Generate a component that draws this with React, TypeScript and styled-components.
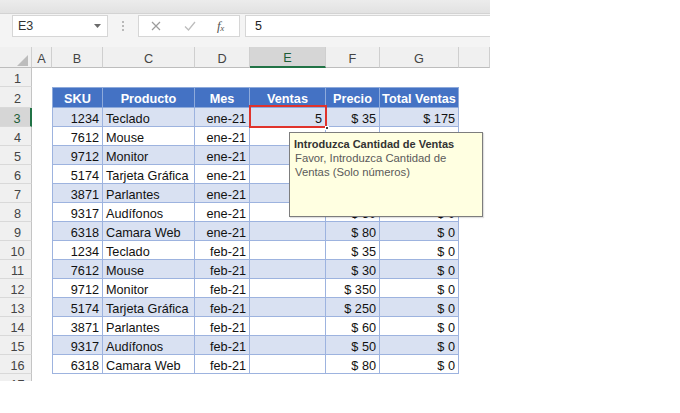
import React from 'react';
import styled, { createGlobalStyle, css } from 'styled-components';

const GlobalStyle = createGlobalStyle`
  html, body { margin: 0; padding: 0; background: #ffffff; }
  body { font-family: "Liberation Sans", Arial, sans-serif; }
  * { box-sizing: border-box; }
`;

const COLS = [32, 20, 51, 92, 55, 76, 54, 79, 31];
const gridCols = COLS.map((c) => `${c}px`).join(' ');

const Page = styled.div`
  width: 680px;
  height: 413px;
  background: #ffffff;
  overflow: hidden;
`;

const Window = styled.div`
  position: relative;
  width: 490px;
  height: 381px;
  overflow: hidden;
  display: flex;
  flex-direction: column;
  background: #ffffff;
`;

const TopStrip = styled.div`
  height: 14px;
  flex: none;
  background: linear-gradient(#ececec, #e2e2e2);
  border-bottom: 1px solid #d3d3d3;
`;

const FormulaBar = styled.div`
  height: 33px;
  flex: none;
  display: flex;
  align-items: flex-start;
  padding: 1px 0 0 12px;
  background: #f4f4f4;
`;

const NameBox = styled.div`
  width: 96px;
  height: 22px;
  display: flex;
  align-items: center;
  justify-content: space-between;
  padding: 0 6px 0 5px;
  background: #ffffff;
  border: 1px solid #d6d6d6;
  font-size: 12.5px;
  color: #333333;
`;

const Dots = styled.div`
  width: 30px;
  height: 22px;
  display: flex;
  flex-direction: column;
  align-items: center;
  justify-content: center;
  gap: 2px;
`;

const Dot = styled.span`
  width: 2px;
  height: 2px;
  background: #b9b9b9;
`;

const FuncBox = styled.div`
  width: 102px;
  height: 22px;
  display: flex;
  align-items: center;
  padding-left: 12px;
  background: #ffffff;
  border: 1px solid #d6d6d6;
`;

const FuncSlot = styled.div<{ $w: number }>`
  width: ${(p) => p.$w}px;
  display: flex;
  align-items: center;
  justify-content: flex-start;
`;

const Fx = styled.span`
  font-family: "Liberation Serif", "Times New Roman", serif;
  font-style: italic;
  font-size: 13px;
  color: #555555;
  letter-spacing: -0.5px;
  sub {
    font-size: 9px;
    vertical-align: -1px;
  }
`;

const FormulaInput = styled.div`
  flex: 1;
  height: 22px;
  margin-left: 5px;
  display: flex;
  align-items: center;
  padding-left: 9px;
  background: #ffffff;
  border: 1px solid #d6d6d6;
  border-right: none;
  font-size: 12.5px;
  color: #222222;
`;

const Sheet = styled.div`
  display: flex;
  flex-direction: column;
  flex: none;
`;

const SheetRow = styled.div<{ $h: number }>`
  display: grid;
  grid-template-columns: ${gridCols};
  height: ${(p) => p.$h}px;
  flex: none;
`;

const headBase = css`
  display: flex;
  align-items: center;
  justify-content: center;
  padding-top: 3px;
  font-size: 12.7px;
  color: #444444;
  background: #f0f0f0;
`;

const Corner = styled.div`
  ${headBase};
  position: relative;
  border-right: 1px solid #cfcfcf;
  border-bottom: 1px solid #bdbdbd;
`;

const ColHead = styled.div<{ $selected?: boolean }>`
  ${headBase};
  border-right: 1px solid #cfcfcf;
  border-bottom: 1px solid #bdbdbd;
  ${(p) =>
    p.$selected &&
    css`
      background: #d6d6d6;
      color: #1d5e38;
      border-bottom: 2px solid #217346;
    `}
`;

const RowHead = styled.div<{ $selected?: boolean }>`
  ${headBase};
  padding-left: 4px;
  border-right: 1px solid #c4c4c4;
  border-bottom: 1px solid #d9d9d9;
  ${(p) =>
    p.$selected &&
    css`
      background: #d6d6d6;
      color: #1d5e38;
      border-right: 2px solid #217346;
    `}
`;

const Blank = styled.div`
  background: #ffffff;
`;

const TableHead = styled.div<{ $first?: boolean }>`
  display: flex;
  align-items: center;
  justify-content: center;
  padding-top: 3px;
  background: #4472c4;
  color: #ffffff;
  font-weight: bold;
  font-size: 12.7px;
  white-space: nowrap;
  border-top: 1px solid #8eaadb;
  border-right: 1px solid #8eaadb;
  border-bottom: 1px solid #8eaadb;
  ${(p) => p.$first && css`border-left: 1px solid #8eaadb;`}
`;

const DataCell = styled.div<{ $band: boolean; $align: 'left' | 'right'; $first?: boolean }>`
  position: relative;
  display: flex;
  align-items: center;
  justify-content: ${(p) => (p.$align === 'left' ? 'flex-start' : 'flex-end')};
  padding: 3px 3px 0;
  font-size: 12.7px;
  color: #111111;
  white-space: nowrap;
  background: ${(p) => (p.$band ? '#d9e1f2' : '#ffffff')};
  border-right: 1px solid #9db3df;
  border-bottom: 1px solid #9db3df;
  ${(p) => p.$first && css`border-left: 1px solid #9db3df;`}
`;

const Selection = styled.div`
  position: absolute;
  top: -3px;
  left: -1px;
  right: -2px;
  bottom: -2px;
  border: 2px solid #e0332c;
  pointer-events: none;
  z-index: 2;
`;

const FillHandle = styled.div`
  position: absolute;
  right: -4px;
  bottom: -4px;
  width: 4px;
  height: 4px;
  background: #444444;
  border: 1px solid #ffffff;
  z-index: 3;
`;

const Tooltip = styled.div`
  position: absolute;
  left: 289px;
  top: 132px;
  width: 194px;
  height: 85px;
  padding: 4px 4px;
  background: #ffffe1;
  border: 1px solid #7d7d7d;
  box-shadow: 1px 1px 1px rgba(0, 0, 0, 0.12);
  z-index: 5;
  font-size: 11.3px;
  line-height: 14px;
  color: #5a5a5a;
`;

const TipTitle = styled.div`
  font-weight: bold;
  color: #333333;
  font-size: 11px;
`;

const TipBody = styled.div`
  padding-left: 1px;
`;

type Row = {
  sku: number;
  prod: string;
  mes: string;
  ventas?: number;
  precio: number;
  total: number;
};

const data: Row[] = [
  { sku: 1234, prod: 'Teclado', mes: 'ene-21', ventas: 5, precio: 35, total: 175 },
  { sku: 7612, prod: 'Mouse', mes: 'ene-21', precio: 30, total: 0 },
  { sku: 9712, prod: 'Monitor', mes: 'ene-21', precio: 350, total: 0 },
  { sku: 5174, prod: 'Tarjeta Gráfica', mes: 'ene-21', precio: 250, total: 0 },
  { sku: 3871, prod: 'Parlantes', mes: 'ene-21', precio: 60, total: 0 },
  { sku: 9317, prod: 'Audífonos', mes: 'ene-21', precio: 50, total: 0 },
  { sku: 6318, prod: 'Camara Web', mes: 'ene-21', precio: 80, total: 0 },
  { sku: 1234, prod: 'Teclado', mes: 'feb-21', precio: 35, total: 0 },
  { sku: 7612, prod: 'Mouse', mes: 'feb-21', precio: 30, total: 0 },
  { sku: 9712, prod: 'Monitor', mes: 'feb-21', precio: 350, total: 0 },
  { sku: 5174, prod: 'Tarjeta Gráfica', mes: 'feb-21', precio: 250, total: 0 },
  { sku: 3871, prod: 'Parlantes', mes: 'feb-21', precio: 60, total: 0 },
  { sku: 9317, prod: 'Audífonos', mes: 'feb-21', precio: 50, total: 0 },
  { sku: 6318, prod: 'Camara Web', mes: 'feb-21', precio: 80, total: 0 },
];

const letters = ['A', 'B', 'C', 'D', 'E', 'F', 'G', ''];
const heads = ['SKU', 'Producto', 'Mes', 'Ventas', 'Precio', 'Total Ventas'];

const money = (v: number) => `$ ${v}`;

export default function App() {
  return (
    <Page>
      <GlobalStyle />
      <Window>
        <TopStrip />
        <FormulaBar>
          <NameBox>
            <span>E3</span>
            <svg width="7" height="4" viewBox="0 0 7 4">
              <polygon points="0,0 7,0 3.5,4" fill="#6b6b6b" />
            </svg>
          </NameBox>
          <Dots>
            <Dot />
            <Dot />
            <Dot />
          </Dots>
          <FuncBox>
            <FuncSlot $w={33}>
              <svg width="10" height="10" viewBox="0 0 10 10">
                <path d="M1 1 L9 9 M9 1 L1 9" stroke="#9c9c9c" strokeWidth="1.2" fill="none" />
              </svg>
            </FuncSlot>
            <FuncSlot $w={33}>
              <svg width="12" height="10" viewBox="0 0 12 10">
                <path d="M1 5.5 L4.5 9 L11 1" stroke="#bdbdbd" strokeWidth="1.3" fill="none" />
              </svg>
            </FuncSlot>
            <FuncSlot $w={20}>
              <Fx>
                f<sub>x</sub>
              </Fx>
            </FuncSlot>
          </FuncBox>
          <FormulaInput>5</FormulaInput>
        </FormulaBar>
        <Sheet>
          <SheetRow $h={21}>
            <Corner>
              <svg width="32" height="21" viewBox="0 0 32 21" style={{ position: 'absolute', left: 0, top: 0 }}>
                <polygon points="28,8 28,19 17,19" fill="#bcbcbc" />
              </svg>
            </Corner>
            {letters.map((l, i) => (
              <ColHead key={i} $selected={l === 'E'}>
                {l}
              </ColHead>
            ))}
          </SheetRow>
          <SheetRow $h={19}>
            <RowHead>1</RowHead>
            {COLS.slice(1).map((_, i) => (
              <Blank key={i} />
            ))}
          </SheetRow>
          <SheetRow $h={21}>
            <RowHead>2</RowHead>
            <Blank />
            {heads.map((h, i) => (
              <TableHead key={h} $first={i === 0}>
                {h}
              </TableHead>
            ))}
            <Blank />
          </SheetRow>
          {data.map((r, i) => {
            const rowNum = i + 3;
            const band = rowNum % 2 === 1;
            const sel = rowNum === 3;
            return (
              <SheetRow $h={19} key={rowNum}>
                <RowHead $selected={sel}>{rowNum}</RowHead>
                <Blank />
                <DataCell $band={band} $align="right" $first>
                  {r.sku}
                </DataCell>
                <DataCell $band={band} $align="left">
                  {r.prod}
                </DataCell>
                <DataCell $band={band} $align="right">
                  {r.mes}
                </DataCell>
                <DataCell $band={band} $align="right">
                  {r.ventas ?? ''}
                  {sel && (
                    <>
                      <Selection />
                      <FillHandle />
                    </>
                  )}
                </DataCell>
                <DataCell $band={band} $align="right">
                  {money(r.precio)}
                </DataCell>
                <DataCell $band={band} $align="right">
                  {money(r.total)}
                </DataCell>
                <Blank />
              </SheetRow>
            );
          })}
          <SheetRow $h={19}>
            <RowHead>17</RowHead>
            {COLS.slice(1).map((_, i) => (
              <Blank key={i} />
            ))}
          </SheetRow>
        </Sheet>
        <Tooltip>
          <TipTitle>Introduzca Cantidad de Ventas</TipTitle>
          <TipBody>
            Favor, Introduzca Cantidad de
            <br />
            Ventas (Solo números)
          </TipBody>
        </Tooltip>
      </Window>
    </Page>
  );
}
